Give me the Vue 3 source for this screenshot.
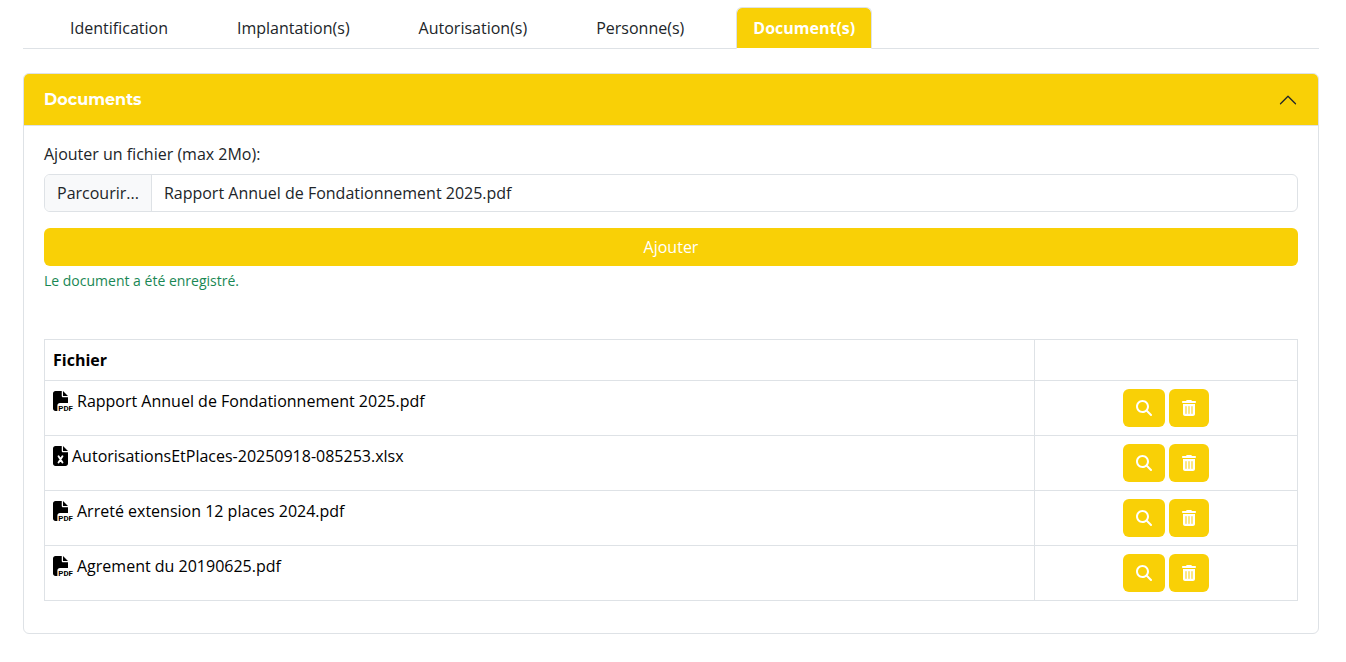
<script setup>
import { ref } from 'vue'

const tabs = ['Identification', 'Implantation(s)', 'Autorisation(s)', 'Personne(s)', 'Document(s)']
const activeTab = ref('Document(s)')
const open = ref(true)
const fileName = ref('Rapport Annuel de Fondationnement 2025.pdf')
const message = ref('Le document a été enregistré.')
const files = ref([
  { name: 'Rapport Annuel de Fondationnement 2025.pdf', type: 'pdf' },
  { name: 'AutorisationsEtPlaces-20250918-085253.xlsx', type: 'excel' },
  { name: 'Arreté extension 12 places 2024.pdf', type: 'pdf' },
  { name: 'Agrement du 20190625.pdf', type: 'pdf' }
])

function pick(event) {
  const file = event.target.files[0]
  if (file) fileName.value = file.name
}

function add() {
  if (!fileName.value) return
  files.value.unshift({ name: fileName.value, type: fileName.value.endsWith('.pdf') ? 'pdf' : 'excel' })
  message.value = 'Le document a été enregistré.'
}

function remove(index) {
  files.value.splice(index, 1)
}
</script>

<template>
  <main class="page">
    <nav class="tabs">
      <a
        v-for="tab in tabs"
        :key="tab"
        href="#"
        class="tab"
        :class="{ active: tab === activeTab }"
        @click.prevent="activeTab = tab"
      >{{ tab }}</a>
    </nav>

    <section class="card">
      <h2 class="card-head">
        <button type="button" class="toggle" :aria-expanded="open" @click="open = !open">
          <span>Documents</span>
          <svg class="chevron" :class="{ closed: !open }" viewBox="0 0 16 16" aria-hidden="true">
            <path d="M2 11L8 5l6 6" fill="none" stroke="#212529" stroke-linecap="round" stroke-linejoin="round" />
          </svg>
        </button>
      </h2>

      <div v-if="open" class="card-body">
        <label class="label" for="fichier">Ajouter un fichier (max 2Mo):</label>
        <div class="file">
          <span class="file-button">Parcourir...</span>
          <span class="file-name">{{ fileName }}</span>
          <input id="fichier" class="file-input" type="file" @change="pick" />
        </div>
        <button type="button" class="btn add" @click="add">Ajouter</button>
        <p class="message">{{ message }}</p>

        <table class="files">
          <thead>
            <tr>
              <th class="col-name" scope="col">Fichier</th>
              <td></td>
            </tr>
          </thead>
          <tbody>
            <tr v-for="(file, index) in files" :key="index">
              <td>
                <div class="entry">
                  <svg v-if="file.type === 'pdf'" class="icon-pdf" viewBox="0 0 512 512" aria-hidden="true">
                    <path d="M0 64C0 28.7 28.7 0 64 0H224V128c0 17.7 14.3 32 32 32H384V304H176c-35.3 0-64 28.7-64 64V512H64c-35.3 0-64-28.7-64-64V64zm384 64H256V0L384 128z" />
                    <text x="136" y="508">PDF</text>
                  </svg>
                  <svg v-else class="icon-excel" viewBox="0 0 384 512" aria-hidden="true">
                    <path d="M64 0C28.7 0 0 28.7 0 64V448c0 35.3 28.7 64 64 64H320c35.3 0 64-28.7 64-64V160H256c-17.7 0-32-14.3-32-32V0H64zM256 0V128H384L256 0z" />
                    <path d="M142 264L242 424M242 264L142 424" fill="none" stroke="#fff" stroke-width="48" stroke-linecap="round" />
                  </svg>
                  <span>{{ file.name }}</span>
                </div>
              </td>
              <td>
                <div class="actions">
                  <button type="button" class="btn" :aria-label="'Consulter ' + file.name">
                    <svg class="icon-search" viewBox="0 0 512 512" aria-hidden="true">
                      <path d="M416 208c0 45.9-14.9 88.3-40 122.7L502.6 457.4c12.5 12.5 12.5 32.8 0 45.3s-32.8 12.5-45.3 0L330.7 376c-34.4 25.2-76.8 40-122.7 40C93.1 416 0 322.9 0 208S93.1 0 208 0S416 93.1 416 208zM208 352a144 144 0 1 0 0-288 144 144 0 1 0 0 288z" />
                    </svg>
                  </button>
                  <button type="button" class="btn" :aria-label="'Supprimer ' + file.name" @click="remove(index)">
                    <svg class="icon-trash" viewBox="0 0 448 512" aria-hidden="true">
                      <path d="M135.2 17.7L128 32H32C14.3 32 0 46.3 0 64S14.3 96 32 96H416c17.7 0 32-14.3 32-32s-14.3-32-32-32H320l-7.2-14.3C307.4 6.8 296.3 0 284.2 0H163.8c-12.1 0-23.2 6.8-28.6 17.7zM416 128H32V448c0 35.3 28.7 64 64 64H352c35.3 0 64-28.7 64-64V128zM144 208V432c0 8.8-7.2 16-16 16s-16-7.2-16-16V208c0-8.8 7.2-16 16-16s16 7.2 16 16zm96 0V432c0 8.8-7.2 16-16 16s-16-7.2-16-16V208c0-8.8 7.2-16 16-16s16 7.2 16 16zm96 0V432c0 8.8-7.2 16-16 16s-16-7.2-16-16V208c0-8.8 7.2-16 16-16s16 7.2 16 16z" />
                    </svg>
                  </button>
                </div>
              </td>
            </tr>
          </tbody>
        </table>
      </div>
    </section>
  </main>
</template>

<style>
body {
  margin: 0;
  background: #fff;
}
</style>

<style scoped>
* {
  box-sizing: border-box;
}

.page {
  padding: 7px 27px 28px 23px;
  font: 16px/24px "Open Sans", "Noto Sans", sans-serif;
  color: #212529;
}

.tabs {
  display: flex;
  gap: 35px;
  padding-left: 30px;
  margin-bottom: 24px;
  border-bottom: 1px solid #dee2e6;
}

.tab {
  margin-bottom: -1px;
  padding: 8px 16px;
  border: 1px solid transparent;
  border-radius: 6px 6px 0 0;
  color: inherit;
  text-decoration: none;
}

.tab.active {
  border-color: #dee2e6 #dee2e6 #fff;
  background: #f9d006;
  background-clip: padding-box;
  color: #fff;
  font-weight: 700;
}

.card {
  border: 1px solid #dee2e6;
  border-radius: 6px;
}

.card-head {
  margin: 0;
}

.toggle {
  display: flex;
  align-items: center;
  justify-content: space-between;
  width: 100%;
  padding: 15px 20px 14px;
  border: 0;
  border-bottom: 1px solid #dee2e6;
  border-radius: 5px 5px 0 0;
  background: #f9d006;
  color: #fff;
  font: 700 16px/22px Montserrat, Inter, sans-serif;
  cursor: pointer;
}

.chevron {
  width: 20px;
  height: 20px;
}

.chevron.closed {
  transform: rotate(180deg);
}

.card-body {
  padding: 16px 20px 32px;
}

.label {
  display: block;
  margin-bottom: 8px;
}

.file {
  position: relative;
  display: flex;
  margin-bottom: 16px;
  border: 1px solid #dee2e6;
  border-radius: 6px;
  overflow: hidden;
}

.file-button {
  padding: 6px 12px;
  border-right: 1px solid #dee2e6;
  background: #f8f9fa;
}

.file-name {
  flex: 1;
  padding: 6px 12px;
}

.file-input {
  position: absolute;
  inset: 0;
  width: 100%;
  height: 100%;
  opacity: 0;
  cursor: pointer;
}

.btn {
  display: flex;
  align-items: center;
  justify-content: center;
  height: 38px;
  padding: 0 13px;
  border: 0;
  border-radius: 6px;
  background: #f9d006;
  color: #fff;
  font: inherit;
  cursor: pointer;
}

.btn.add {
  width: 100%;
}

.btn svg {
  height: 16px;
  fill: #fff;
}

.icon-search {
  width: 16px;
}

.icon-trash {
  width: 14px;
}

.message {
  margin: 4px 0 48px;
  color: #198754;
  font-size: 14px;
  line-height: 21px;
}

.files {
  width: 100%;
  border-collapse: collapse;
  color: #000;
}

.files th,
.files td {
  padding: 8px;
  border: 1px solid #dee2e6;
  text-align: left;
  vertical-align: top;
}

.col-name {
  width: 79%;
}

.entry {
  display: flex;
  align-items: center;
  gap: 4px;
}

.icon-pdf {
  width: 20px;
  height: 20px;
  overflow: visible;
}

.icon-pdf text {
  font: 700 204px Roboto, sans-serif;
}

.icon-excel {
  width: 15px;
  height: 20px;
}

.actions {
  display: flex;
  justify-content: center;
  gap: 4px;
}
</style>
